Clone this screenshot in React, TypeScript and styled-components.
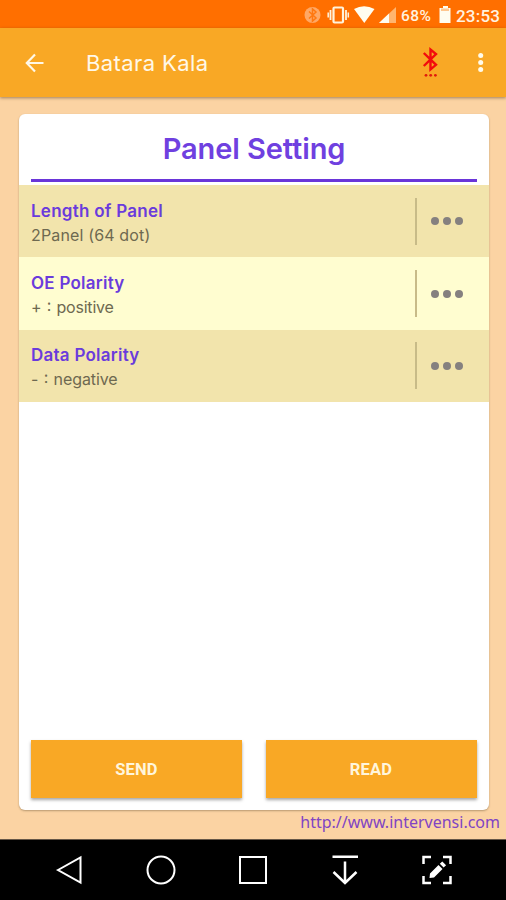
import React from "react";
import styled, { createGlobalStyle } from "styled-components";

const Global = createGlobalStyle`
  * { box-sizing: border-box; }
  body { margin: 0; font-family: Inter, Roboto, sans-serif; }
`;

const Screen = styled.div`
  width: 506px;
  height: 900px;
  display: flex;
  flex-direction: column;
  overflow: hidden;
  background: #fbd3a3;
`;

const StatusBar = styled.header`
  height: 28px;
  flex: none;
  display: flex;
  align-items: center;
  background: #ff6f00;
  color: #fff3e0;
`;

const StatusIcons = styled.svg`
  width: 96px;
  height: 28px;
  margin-left: 303px;
`;

const StatusText = styled.span<{ $width: number; $size: number; $spacing: number }>`
  width: ${(p) => p.$width}px;
  padding: 3px 0 0 2px;
  font-family: Roboto, sans-serif;
  font-size: ${(p) => p.$size}px;
  font-weight: 500;
  letter-spacing: ${(p) => p.$spacing}px;
  line-height: 28px;
  white-space: nowrap;
`;

const Battery = styled.svg`
  width: 15px;
  height: 28px;
`;

const AppBar = styled.div`
  height: 69px;
  flex: none;
  display: flex;
  align-items: center;
  background: #f9a825;
  box-shadow: 0 1px 3px rgba(90, 60, 30, 0.55);
`;

const BarIcon = styled.svg<{ $w: number; $left: number }>`
  width: ${(p) => p.$w}px;
  height: 69px;
  margin-left: ${(p) => p.$left}px;
  flex: none;
`;

const AppTitle = styled.h1`
  margin: 0 0 0 41px;
  width: 332px;
  font-size: 22px;
  font-weight: 400;
  letter-spacing: 0.4px;
  line-height: 69px;
  padding-top: 1px;
  color: #fff8e8;
`;

const Body = styled.main`
  flex: 1;
  display: flex;
  flex-direction: column;
  padding: 17px 17px 0 19px;
`;

const Card = styled.section`
  height: 696px;
  display: flex;
  flex-direction: column;
  background: #fff;
  border-radius: 6px;
  box-shadow: 0 1px 2px rgba(100, 80, 50, 0.45);
`;

const CardTitle = styled.h2`
  margin: 0 12px 3px;
  height: 68px;
  border-bottom: 3px solid #6a35d9;
  text-align: center;
  font-size: 29px;
  font-weight: 600;
  letter-spacing: -0.1px;
  line-height: 70px;
  color: #6f40e0;
`;

const Row = styled.div<{ $light?: boolean }>`
  height: 72.4px;
  flex: none;
  display: flex;
  align-items: center;
  padding: 0 25px 0 12px;
  background: ${(p) => (p.$light ? "#fffdd0" : "#f2e4ac")};
`;

const RowText = styled.div`
  flex: 1;
  display: flex;
  flex-direction: column;
  padding-top: 3px;
`;

const RowTitle = styled.span`
  font-size: 17px;
  font-weight: 600;
  line-height: 24px;
  letter-spacing: 0.25px;
  color: #6a3bdc;
`;

const RowValue = styled.span<{ $spacing: number }>`
  font-size: 16px;
  line-height: 24px;
  letter-spacing: ${(p) => p.$spacing}px;
  color: #6e6950;
`;

const Colon = styled.span`
  margin: 0 1px;
  vertical-align: 2px;
  line-height: 1;
`;

const More = styled.div`
  height: 47px;
  width: 49px;
  padding-left: 14px;
  display: flex;
  align-items: center;
  gap: 4px;
  border-left: 2px solid #c8bb88;
`;

const Dot = styled.i`
  width: 8px;
  height: 8px;
  border-radius: 50%;
  background: #85807f;
`;

const Actions = styled.div`
  margin-top: auto;
  padding: 0 12.5px 12px 12px;
  display: grid;
  grid-template-columns: 1fr 1fr;
  gap: 23.5px;
`;

const ActionButton = styled.button`
  height: 58px;
  border: 0;
  padding: 0;
  background: #f9a825;
  box-shadow: 0 2px 3px rgba(0, 0, 0, 0.35);
  color: #fff5dc;
  font: 700 16.5px Roboto, sans-serif;
  letter-spacing: 0.2px;
`;

const SiteLink = styled.a`
  align-self: flex-end;
  margin-right: -11px;
  font-family: "Noto Sans", sans-serif;
  font-size: 16px;
  line-height: 24px;
  color: #8044c4;
`;

const NavBar = styled.nav`
  height: 61px;
  flex: none;
  display: flex;
  align-items: center;
  justify-content: space-between;
  padding: 0 53px;
  background: #000;
  border-top: 1px solid #665747;
`;

const NavIcon = styled.svg`
  width: 32px;
  height: 32px;
  fill: none;
  stroke: #fff;
  stroke-width: 2;
`;

const rows = [
  { title: "Length of Panel", value: "2Panel (64 dot)", spacing: 0.15 },
  { title: "OE Polarity", mark: "+", value: "positive", spacing: -0.2, light: true },
  { title: "Data Polarity", mark: "-", value: "negative", spacing: -0.1 },
];

export default function App() {
  return (
    <>
      <Global />
      <Screen>
        <StatusBar>
          <StatusIcons viewBox="0 0 96 28">
            <circle cx="9.5" cy="15" r="8" fill="#ffa865" />
            <path d="M6 11.500l7 6.500-3.500 3V9l3.500 3-7 6.500" fill="none" stroke="#ff7810" strokeWidth="1.500" />
            <g fill="none" stroke="#fff3dc">
              <rect x="30.500" y="7.500" width="9.500" height="15" rx="1" strokeWidth="2.200" />
              <path d="M27.500 10v10M43 10v10" strokeWidth="1.800" />
              <path d="M25.200 12.500v5M45.300 12.500v5" strokeWidth="1.500" />
            </g>
            <path d="M51 9Q61 3.500 71.500 9L61.300 23Z" fill="#fffdf0" />
            <path d="M76 23L93 7v16Z" fill="#ffb56f" />
            <path d="M76 23L86 13.500V23Z" fill="#fffdf0" />
          </StatusIcons>
          <StatusText $width={40} $size={15.5} $spacing={0.4}>68%</StatusText>
          <Battery viewBox="0 0 15 28">
            <path d="M4 6h5v2h2.500v15H0.500V8H4z" fill="#fffdf0" />
            <path d="M2 8.500h8V11H2z" fill="#ffc78f" />
          </Battery>
          <StatusText $width={50} $size={17} $spacing={0.2}>23:53</StatusText>
        </StatusBar>
        <AppBar>
          <BarIcon $w={20} $left={25} viewBox="0 0 20 69">
            <path d="M18.500 35H2M10 26.500L1.800 35L10 43.500" fill="none" stroke="#fff8e8" strokeWidth="2.200" />
          </BarIcon>
          <AppTitle>Batara Kala</AppTitle>
          <BarIcon $w={20} $left={3} viewBox="0 0 20 69">
            <path d="M2.800 25L15 36.800L9.500 41.500V21.500L15 26L2.800 38" fill="none" stroke="#f20d0d" strokeWidth="2.400" />
            <g fill="#e01c0c">
              <circle cx="5" cy="47.300" r="1.400" />
              <circle cx="9.700" cy="47.300" r="1.400" />
              <circle cx="14.400" cy="47.300" r="1.400" />
            </g>
          </BarIcon>
          <BarIcon $w={8} $left={36} viewBox="0 0 8 69">
            <g fill="#fffbea">
              <circle cx="3.700" cy="27.500" r="2.500" />
              <circle cx="3.700" cy="34.500" r="2.500" />
              <circle cx="3.700" cy="41.500" r="2.500" />
            </g>
          </BarIcon>
        </AppBar>
        <Body>
          <Card>
            <CardTitle>Panel Setting</CardTitle>
            {rows.map((r) => (
              <Row key={r.title} $light={r.light}>
                <RowText>
                  <RowTitle>{r.title}</RowTitle>
                  <RowValue $spacing={r.spacing}>
                    {r.mark && <>{r.mark} <Colon>:</Colon> </>}
                    {r.value}
                  </RowValue>
                </RowText>
                <More><Dot /><Dot /><Dot /></More>
              </Row>
            ))}
            <Actions>
              <ActionButton>SEND</ActionButton>
              <ActionButton>READ</ActionButton>
            </Actions>
          </Card>
          <SiteLink>http://www.intervensi.com</SiteLink>
        </Body>
        <NavBar>
          <NavIcon viewBox="0 0 32 32"><path d="M5 16L27.500 3.500V28.500Z" /></NavIcon>
          <NavIcon viewBox="0 0 32 32"><circle cx="16" cy="16" r="13.500" /></NavIcon>
          <NavIcon viewBox="0 0 32 32"><rect x="3" y="3" width="26" height="26" /></NavIcon>
          <NavIcon viewBox="0 0 32 32"><path d="M3.500 2.800h25.500M16 7.500v21M4.500 18L16 29L27.500 18" strokeWidth="2.500" /></NavIcon>
          <NavIcon viewBox="0 0 32 32">
            <path d="M2.500 10V3H10M22 3h7.500v7M2.500 22v7H10M22 29h7.500v-7" strokeWidth="2.500" />
            <path d="M8.500 24l0.500-4.500 8.500-8.500 4 4-8.500 8.500zM18.800 9.800l2.500-2.300 3.800 3.800-2.500 2.300z" fill="#fff" stroke="none" />
          </NavIcon>
        </NavBar>
      </Screen>
    </>
  );
}
